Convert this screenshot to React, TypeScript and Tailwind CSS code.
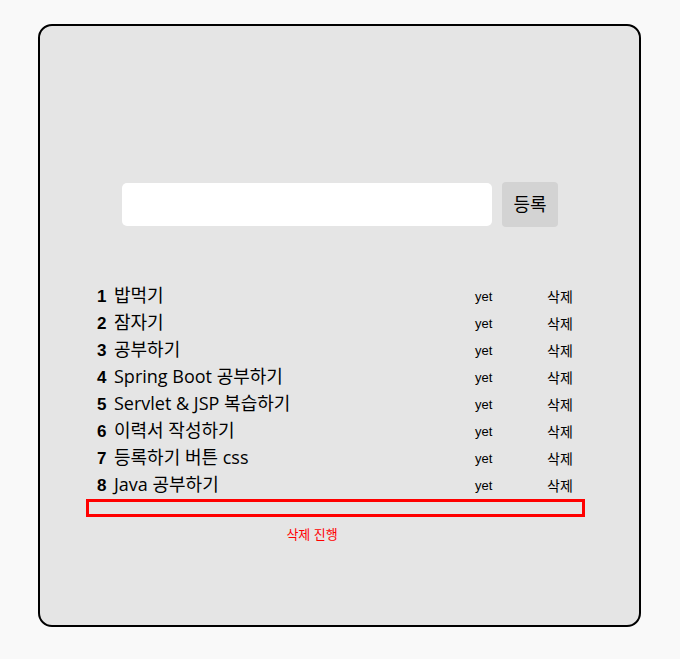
const todos = [
  "밥먹기",
  "잠자기",
  "공부하기",
  "Spring Boot 공부하기",
  "Servlet & JSP 복습하기",
  "이력서 작성하기",
  "등록하기 버튼 css",
  "Java 공부하기",
];

export default function App() {
  return (
    <div className="min-h-[659px] w-full bg-[#f9f9f9] pt-[24px] font-['Open_Sans','Noto_Sans_CJK_KR',sans-serif]">
      <div className="ml-[38px] h-[603px] w-[603px] rounded-[14px] border-2 border-black bg-[#e5e5e5] pt-[156px]">
        <div className="flex items-center gap-[10px] pl-[82px]">
          <input className="h-[43px] w-[370px] rounded-[5px] bg-white outline-none" />
          <button className="h-[45px] w-[56px] rounded-[4px] bg-[#d3d3d3] text-[18px] text-black">
            등록
          </button>
        </div>
        <ul className="ml-[46px] mt-[56px] w-[499px]">
          {todos.map((t, i) => (
            <li key={i} className="flex h-[27px] items-center pl-[11px] text-black">
              <span className="w-[17px] font-['Liberation_Sans',sans-serif] text-[17px] font-bold">{i + 1}</span>
              <span className="-mt-[3px] w-[361px] text-[18px] leading-none">{t}</span>
              <span className="w-[72px] font-['Liberation_Sans',sans-serif] text-[13px]">yet</span>
              <span className="text-[14px]">삭제</span>
            </li>
          ))}
        </ul>
        <div className="ml-[46px] h-[18px] w-[499px] border-[3px] border-[#ff0000]" />
        <div className="ml-[46px] mt-[11px] w-[452px] text-center text-[13px] leading-none text-[#ff0000]">
          삭제 진행
        </div>
      </div>
    </div>
  );
}
